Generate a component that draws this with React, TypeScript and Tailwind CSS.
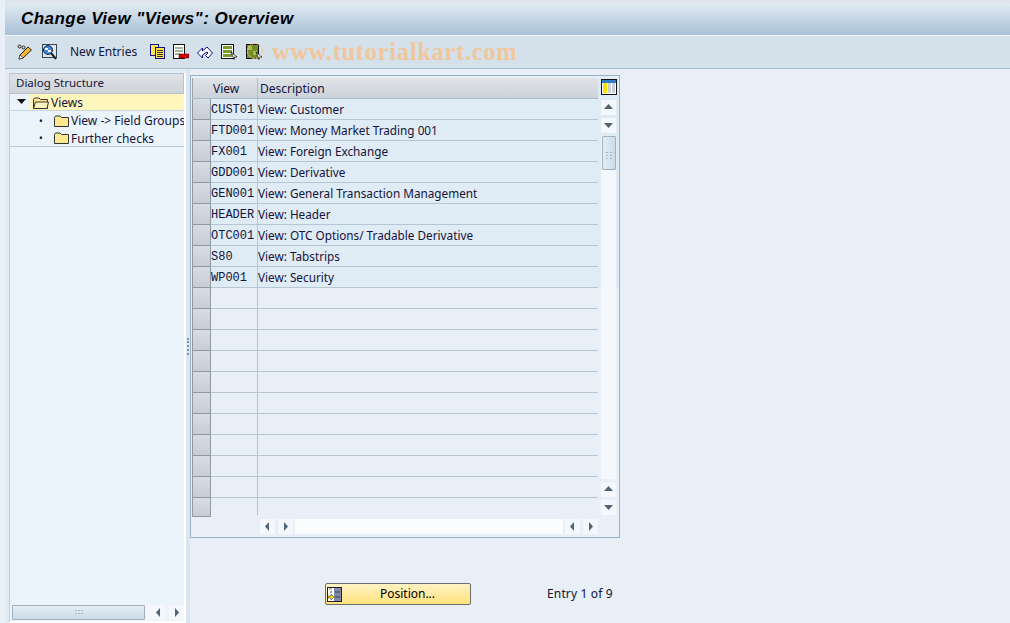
import React from 'react';

const rows = [
  ['CUST01', 'View: Customer'],
  ['FTD001', 'View: Money Market Trading 001'],
  ['FX001', 'View: Foreign Exchange'],
  ['GDD001', 'View: Derivative'],
  ['GEN001', 'View: General Transaction Management'],
  ['HEADER', 'View: Header'],
  ['OTC001', 'View: OTC Options/ Tradable Derivative'],
  ['S80', 'View: Tabstrips'],
  ['WP001', 'View: Security'],
  ['', ''], ['', ''], ['', ''], ['', ''], ['', ''], ['', ''], ['', ''], ['', ''], ['', ''], ['', ''],
];

const Folder = ({ open }: { open?: boolean }) => (
  <svg width="16" height="13" viewBox="0 0 16 13" className="shrink-0">
    <path d="M0.5 2.5 L1.5 1 H6 L7.5 2.5 H14.5 V11.5 H0.5 Z" fill="#ffe98f" stroke="#333" />
    {open && <path d="M0.5 11.5 L2.5 5 H15.5 L14 11.5 Z" fill="#fff3c0" stroke="#333" />}
  </svg>
);

const Arrow = ({ dir }: { dir: 'up' | 'down' | 'left' | 'right' }) => {
  const d = { up: 'M3 9 L7.5 4 L12 9 Z', down: 'M3 5 H12 L7.5 10 Z', left: 'M9 3 V12 L5 7.5 Z', right: 'M6 3 V12 L10 7.5 Z' }[dir];
  return (
    <div className="w-[15px] h-[15px] bg-[#f4f7fb] shrink-0">
      <svg width="15" height="15" viewBox="0 0 15 15"><path d={d} fill="#4f6478" /></svg>
    </div>
  );
};

const Grip = () => (
  <svg width="8" height="6" viewBox="0 0 8 6"><path d="M0 0h2v1H0zM3 0h2v1H3zM6 0h2v1H6zM0 3h2v1H0zM3 3h2v1H3zM6 3h2v1H6z" fill="#a9b4bf" /></svg>
);

const Cursor = () => <path d="M10 8 L16 13 L13.5 13 L13 15.5 Z" fill="#fff" stroke="#111" strokeWidth="0.8" />;

export default function App() {
  return (
    <div className="relative w-[1010px] h-[623px] overflow-hidden bg-[#e8eff6] text-[12px] text-[#14143c] font-['Noto_Sans',sans-serif]">
      <div className="h-[4px] ml-[5px] bg-[#dfe5ec]" />
      {/* title */}
      <div className="ml-[5px] h-[31px] flex items-center pl-[16px] pb-[2px] bg-gradient-to-b from-[#e0e9f1] to-[#a9c1d6]">
        <h1 className="text-[17px] font-bold italic text-black font-['Liberation_Sans',sans-serif] tracking-[0.45px]">Change View "Views": Overview</h1>
      </div>
      {/* toolbar */}
      <div className="ml-[5px] h-[34px] border-t border-[#f0f5fa] border-b border-b-[#a9bdd0] bg-[#d4e0ea] flex items-center pl-[12px]">
        <svg width="16" height="16" viewBox="0 0 16 16" className="shrink-0">
          <path d="M3 11 L11 3 L14.5 6 L6 14 L2 15 Z" fill="#f7b52c" stroke="#222" />
          <path d="M2 15 L3 11 L6 14 Z" fill="#fff" stroke="#222" strokeWidth="0.6" />
          <circle cx="2.5" cy="2.5" r="1.5" fill="none" stroke="#222" />
          <circle cx="6.5" cy="3.5" r="1.5" fill="none" stroke="#222" />
        </svg>
        <svg width="16" height="16" viewBox="0 0 16 16" className="shrink-0 ml-[8px]">
          <rect x="1.5" y="0.5" width="14" height="13" fill="#dfe7ee" stroke="#33475a" />
          <circle cx="7" cy="6" r="4.5" fill="#3d8ae0" stroke="#222" />
          <path d="M4 4h3v2H4zM7 6h3v2H7z" fill="#fff" />
          <path d="M10 9 L15 15" stroke="#222" strokeWidth="2" />
        </svg>
        <span className="ml-[13px] w-[67px] whitespace-nowrap">New Entries</span>
        <svg width="16" height="16" viewBox="0 0 16 16" className="shrink-0 ml-[12px]">
          <rect x="1.5" y="0.5" width="8" height="11" fill="#ffe34d" stroke="#11118a" />
          <rect x="6.5" y="3.5" width="9" height="11" fill="#ffe34d" stroke="#11118a" />
          <path d="M8 6.5h6M8 8.5h6M8 10.5h6M8 12.5h6" stroke="#333" />
        </svg>
        <svg width="16" height="16" viewBox="0 0 16 16" className="shrink-0 ml-[8px]">
          <rect x="0.5" y="0.5" width="11" height="14" fill="#fff" stroke="#111" />
          <path d="M2 3h8v2H2zM2 6h8v2H2zM2 9h5v2H2z" fill="#9fb59a" />
          <rect x="6" y="10" width="10" height="4" fill="#d80000" stroke="#5a0000" strokeWidth="0.5" />
        </svg>
        <svg width="16" height="16" viewBox="0 0 16 16" className="shrink-0 ml-[8px]">
          <path d="M0.5 9 L5.5 4 V7 L10 3 L15.5 9 L11 14 L8.5 11.5 L11 9 L10 8 L5.5 11 V14 Z" fill="#fff" stroke="#11118a" />
        </svg>
        <svg width="16" height="16" viewBox="0 0 16 16" className="shrink-0 ml-[8px]">
          <rect x="0.5" y="0.5" width="12" height="14" fill="#fff" stroke="#111" />
          <path d="M2 2h9v3H2zM2 6h9v3H2zM2 10h9v3H2z" fill="#7c9a2e" />
          <Cursor />
        </svg>
        <svg width="16" height="16" viewBox="0 0 16 16" className="shrink-0 ml-[9px]">
          <rect x="0.5" y="0.5" width="12" height="14" fill="#6f8d24" stroke="#111" />
          <path d="M2 2h4v4H2zM7 7h4v4H7z" fill="#a8bc4e" />
          <Cursor />
        </svg>
      </div>
      <svg width="18" height="18" viewBox="0 0 18 18" className="absolute left-[246px] top-[42px]">
        <circle cx="9" cy="9" r="7.5" fill="none" stroke="#f0c79a" strokeDasharray="3 1" />
      </svg>
      <div className="absolute left-[272px] top-[34px] text-[24.5px] font-bold text-[#f0c79a] font-['Liberation_Serif',serif] tracking-[0.7px]">www.tutorialkart.com</div>

      {/* body */}
      <div className="flex h-[554px]">
        {/* tree panel */}
        <div className="w-[181px] ml-[5px] shrink-0 bg-[#e3ecf4] pl-[4px] pt-[4px] flex flex-col">
          <div className="flex-1 flex flex-col border-l border-[#c3ccd6] border-r-2 border-r-[#fff] border-b-2 border-b-[#fff] bg-[#ebf3fb]">
            <div className="h-[21px] bg-gradient-to-b from-[#e0e3e7] to-[#cfd4da] border-t border-b border-r border-[#b9c2cc] flex items-center pl-[6px] pb-[1px] text-[11.5px] shrink-0">Dialog Structure</div>
            <div className="h-[17px] flex items-center border-b border-[#c8d6e2] pl-[7px] shrink-0">
              <svg width="9" height="6" viewBox="0 0 9 6"><path d="M0 0H9L4.5 5Z" fill="#111" /></svg>
              <div className="flex-1 ml-[4px] h-full bg-[#fff6bb] flex items-center pl-[3px] pt-[2px] gap-[2px]">
                <Folder open />
                <span>Views</span>
              </div>
            </div>
            <div className="h-[18px] flex items-center pl-[29px] pt-[2px] whitespace-nowrap overflow-hidden shrink-0">
              <span className="w-[15px] shrink-0 text-[10px]">•</span>
              <Folder /><span className="ml-[1px]">View -&gt; Field Groups</span>
            </div>
            <div className="h-[18px] flex items-center pl-[29px] pt-[2px] border-b border-[#b9c8d6] shrink-0">
              <span className="w-[15px] shrink-0 text-[10px]">•</span>
              <Folder /><span className="ml-[1px]">Further checks</span>
            </div>
            <div className="flex-1" />
            <div className="h-[15px] mb-[1px] flex items-center pl-[2px] shrink-0">
              <div className="w-[133px] h-[15px] rounded-[1px] border border-[#9fb0be] bg-gradient-to-b from-[#e4edf4] to-[#cbdbe8] flex items-center justify-center"><Grip /></div>
              <div className="w-[5px] h-[15px] bg-[#f4f7fb] ml-[1px]" />
              <Arrow dir="left" />
              <div className="w-[3px]" />
              <Arrow dir="right" />
            </div>
          </div>
        </div>
        {/* splitter */}
        <div className="w-[4px] bg-[#dce6ee] flex items-center justify-center shrink-0">
          <div className="w-[2px] h-[17px] border-l-2 border-dotted border-[#8296a8]" />
        </div>
        {/* table area */}
        <div className="flex-1 pt-[6px] flex flex-col">
          <div className="w-[430px] h-[463px] border border-[#96b0c8] flex flex-col pl-[1px] pt-[2px]">
            <div className="flex flex-1 min-h-0">
              <div className="w-[406px] flex flex-col">
                <div className="h-[21px] flex border-b border-[#a9bdd0] bg-gradient-to-b from-[#dfe3e7] to-[#cdd2d9] shrink-0">
                  <div className="w-[19px] border-l border-[#99a3ad]" />
                  <div className="w-[47px] pl-[2px] pt-[1px] border-r border-[#b3bec9] flex items-center">View</div>
                  <div className="flex-1 pl-[2px] pt-[1px] flex items-center">Description</div>
                </div>
                {rows.map((r, i) => (
                  <div key={i} className="h-[21px] flex shrink-0">
                    <div className="w-[19px] border-x border-b border-[#8f99a3] bg-gradient-to-b from-[#d8dde3] to-[#c8cdd4]" />
                    <div className={`w-[47px] pt-[1px] border-r border-b border-[#b7c6d5] flex items-center font-['Liberation_Mono',monospace] text-[12px] ${r[0] ? 'bg-[#dfebf5]' : ''}`}>{r[0]}</div>
                    <div className={`flex-1 pt-[1px] border-b border-[#b7c6d5] flex items-center text-[11.75px] ${r[0] ? 'bg-[#dfebf5]' : ''}`}>{r[1]}</div>
                  </div>
                ))}
                <div className="h-[19px] flex shrink-0">
                  <div className="w-[19px] border-x border-b border-[#8f99a3] bg-gradient-to-b from-[#d8dde3] to-[#c8cdd4]" />
                  <div className="w-[47px] h-[17px] border-r border-[#b7c6d5]" />
                </div>
              </div>
              {/* vertical scroll */}
              <div className="w-[21px] flex flex-col pl-[3px] pt-[1px] pb-[3px] bg-[linear-gradient(#dfebf5_0,#dfebf5_210px,transparent_210px)]">
                <svg width="16" height="16" viewBox="0 0 16 16" className="shrink-0 mb-[5px]">
                  <rect width="16" height="16" fill="#111" />
                  <rect x="1" y="1" width="14" height="14" fill="#fff" />
                  <rect x="1" y="1" width="14" height="3" fill="#2f7fc8" />
                  <rect x="2" y="4" width="4" height="10" fill="#ffe000" />
                  <rect x="7" y="4" width="3" height="10" fill="#c9ced4" />
                  <rect x="11" y="4" width="3" height="10" fill="#c9ced4" />
                </svg>
                <div className="w-[15px] flex-1 flex flex-col gap-[3px] min-h-0">
                  <Arrow dir="up" />
                  <Arrow dir="down" />
                  <div className="flex-1 flex flex-col items-end bg-[#f4f7fb] min-h-0">
                    <div className="w-[14px] h-[34px] rounded-[1px] border border-[#9fb0be] bg-gradient-to-r from-[#e4edf4] to-[#cbdbe8] flex items-end justify-center pb-[9px]"><svg width="6" height="8" viewBox="0 0 6 8"><path d="M0 0h2v1H0zM4 0h2v1H4zM0 3h2v1H0zM4 3h2v1H4zM0 6h2v1H0zM4 6h2v1H4z" fill="#a9b4bf" /></svg></div>
                  </div>
                  <Arrow dir="up" />
                  <Arrow dir="down" />
                </div>
              </div>
            </div>
            <div className="h-[19px] flex items-start shrink-0 pl-[68px] pt-[1px]">
              <Arrow dir="left" />
              <div className="w-[3px]" />
              <Arrow dir="right" />
              <div className="w-[268px] h-[15px] bg-[#fbfcfd] mx-[2px]" />
              <Arrow dir="left" />
              <div className="w-[3px]" />
              <Arrow dir="right" />
            </div>
          </div>
          <div className="flex items-center mt-[45px] ml-[135px]">
            <button className="w-[146px] h-[22px] rounded-[2px] border border-[#6d6d6d] bg-gradient-to-b from-[#fff3c4] to-[#ffe27c] flex items-center">
              <svg width="15" height="15" viewBox="0 0 15 15" className="shrink-0 ml-[1px]">
                <rect x="0.5" y="0.5" width="14" height="14" fill="#fff" stroke="#222" />
                <rect x="7" y="1" width="7" height="13" fill="#8089ad" />
                <path d="M8 5h5M8 10h5" stroke="#444" />
                <path d="M2 2h3M3 4l2 1-2 1" fill="none" stroke="#555" strokeWidth="0.7" />
                <path d="M1 9h3V7l3 3-3 3v-2H1z" fill="#ffe000" stroke="#222" strokeWidth="0.5" />
              </svg>
              <span className="flex-1 text-center pl-[3px] text-black">Position...</span>
            </button>
            <span className="ml-[76px] tracking-[0.15px]">Entry 1 of 9</span>
          </div>
        </div>
      </div>
    </div>
  );
}
